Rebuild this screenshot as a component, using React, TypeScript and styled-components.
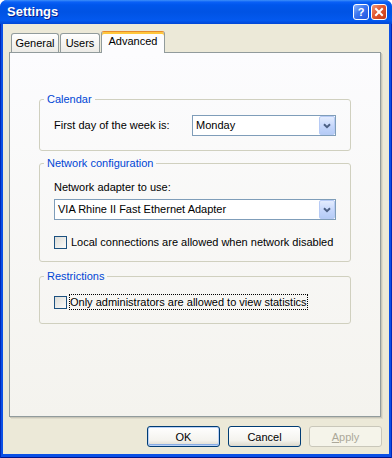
import styled, { createGlobalStyle } from "styled-components";

const GlobalStyle = createGlobalStyle`
  html, body {
    margin: 0;
    padding: 0;
    background: #ffffff;
  }
  body {
    font-family: "Liberation Sans", Arial, sans-serif;
    font-size: 11px;
    color: #000000;
  }
`;

const tabs = [
  { label: "General", width: 48 },
  { label: "Users", width: 40 },
  { label: "Advanced", width: 64, active: true },
];

function Chevron() {
  return (
    <svg width="8" height="6" viewBox="0 0 8 6">
      <path d="M1 1.2 L4 4.2 L7 1.2" fill="none" stroke="#4d6185" strokeWidth="2" />
    </svg>
  );
}

function Combo({ value, width }: { value: string; width?: number }) {
  return (
    <StCombo $width={width}>
      <StComboText>{value}</StComboText>
      <StDropButton>
        <Chevron />
      </StDropButton>
    </StCombo>
  );
}

function App() {
  return (
    <>
      <GlobalStyle />
      <StWindow>
        <StTitleBar>
          <StTitle>Settings</StTitle>
          <StCaptionButton $kind="help">?</StCaptionButton>
          <StCaptionButton $kind="close">
            <svg width="10" height="10" viewBox="0 0 10 10">
              <path d="M2 2 L8 8 M8 2 L2 8" stroke="#ffffff" strokeWidth="2" strokeLinecap="square" />
            </svg>
          </StCaptionButton>
        </StTitleBar>
        <StFrame>
          <StBody>
            <StTabRow>
              {tabs.map((tab) => (
                <StTab key={tab.label} $width={tab.width} $active={tab.active}>
                  {tab.label}
                </StTab>
              ))}
            </StTabRow>
            <StPanel>
              <StGroup $top={0}>
                <StLegend>Calendar</StLegend>
                <StGroupBody $pad="9px 14px 14px">
                  <StRow>
                    <StLabel>First day of the week is:</StLabel>
                    <Combo value="Monday" width={144} />
                  </StRow>
                </StGroupBody>
              </StGroup>

              <StGroup $top={6}>
                <StLegend>Network configuration</StLegend>
                <StGroupBody $pad="11px 14px 11px">
                  <StLabel>Network adapter to use:</StLabel>
                  <StStack>
                    <Combo value="VIA Rhine II Fast Ethernet Adapter" />
                  </StStack>
                  <StCheckRow $top={14}>
                    <StCheck />
                    <StCheckLabel>Local connections are allowed when network disabled</StCheckLabel>
                  </StCheckRow>
                </StGroupBody>
              </StGroup>

              <StGroup $top={8}>
                <StLegend>Restrictions</StLegend>
                <StGroupBody $pad="11px 14px 13px">
                  <StCheckRow $top={0}>
                    <StCheck />
                    <StCheckLabel $focused>Only administrators are allowed to view statistics</StCheckLabel>
                  </StCheckRow>
                </StGroupBody>
              </StGroup>
            </StPanel>
            <StButtonRow>
              <StButton $default>OK</StButton>
              <StButton>Cancel</StButton>
              <StButton disabled>
                <u>A</u>pply
              </StButton>
            </StButtonRow>
          </StBody>
        </StFrame>
      </StWindow>
    </>
  );
}

export default App;

const StWindow = styled.div`
  width: 392px;
  height: 458px;
  display: flex;
  flex-direction: column;
  border-radius: 7px 7px 0 0;
  overflow: hidden;
  background: #0a4be0;
`;

const StTitleBar = styled.div`
  height: 24px;
  flex: none;
  display: flex;
  align-items: center;
  gap: 2px;
  padding: 0 5px 0 7px;
  background: linear-gradient(
    to bottom,
    #3d8ff9 0px,
    #0a60f7 2px,
    #0056ec 5px,
    #0053e4 50%,
    #0359ef 85%,
    #0046d6 100%
  );
`;

const StTitle = styled.div`
  flex: 1;
  color: #ffffff;
  font-weight: bold;
  font-size: 13px;
  line-height: 16px;
  text-shadow: 1px 1px 0 #0a1e8c;
`;

const StCaptionButton = styled.div<{ $kind: "help" | "close" }>`
  width: 16px;
  height: 16px;
  box-sizing: border-box;
  border: 1px solid #ffffff;
  border-radius: 3px;
  display: flex;
  align-items: center;
  justify-content: center;
  color: #ffffff;
  font-weight: bold;
  font-size: 11px;
  line-height: 11px;
  background: ${(p) =>
    p.$kind === "close"
      ? "linear-gradient(135deg, #ef9a7c 0%, #e2562f 45%, #c63a14 100%)"
      : "linear-gradient(135deg, #8bb4fb 0%, #3b75ef 45%, #1f55df 100%)"};
`;

const StFrame = styled.div`
  flex: 1;
  display: flex;
  padding: 0 3px 4px;
  background: #0b50e6;
  box-shadow: inset 1px 0 #0029b8, inset -1px 0 #0029b8, inset 0 -1px #00138c;
`;

const StBody = styled.div`
  flex: 1;
  display: flex;
  flex-direction: column;
  padding: 7px 7px 0 6px;
  background: #ece9d8;
`;

const StTabRow = styled.div`
  position: relative;
  z-index: 1;
  height: 21px;
  display: flex;
  align-items: flex-end;
  gap: 1px;
  padding-left: 2px;
`;

const StTab = styled.div<{ $active?: boolean; $width: number }>`
  width: ${(p) => p.$width}px;
  height: ${(p) => (p.$active ? 22 : 19)}px;
  margin-bottom: ${(p) => (p.$active ? -1 : 0)}px;
  box-sizing: border-box;
  border: 1px solid #919b9c;
  border-bottom: none;
  border-top-color: ${(p) => (p.$active ? "#e68b2c" : "#919b9c")};
  border-radius: 3px 3px 0 0;
  padding-top: 3px;
  text-align: center;
  line-height: 13px;
  background: ${(p) =>
    p.$active ? "#fcfcfe" : "linear-gradient(to bottom, #ffffff, #ecebe6)"};
  box-shadow: ${(p) => (p.$active ? "inset 0 2px 0 #ffc73c" : "none")};
`;

const StPanel = styled.div`
  width: 372px;
  height: 365px;
  flex: none;
  box-sizing: border-box;
  border: 1px solid #919b9c;
  box-shadow: 1px 1px 0 #c9c6b8, 2px 2px 0 #dedbcb;
  background: linear-gradient(to bottom, #fcfcfe, #f4f3ee);
  padding: 40px 29px 0;
  display: flex;
  flex-direction: column;
`;

const StGroup = styled.fieldset<{ $top: number }>`
  margin: ${(p) => p.$top}px 0 0;
  padding: 0;
  min-width: 0;
  border: 1px solid #d0d0bf;
  border-radius: 3px;
`;

const StLegend = styled.legend`
  margin-left: 4px;
  padding: 0 3px;
  color: #0046d5;
  font-size: 11px;
  line-height: 13px;
`;

const StGroupBody = styled.div<{ $pad: string }>`
  padding: ${(p) => p.$pad};
`;

const StRow = styled.div`
  display: flex;
  align-items: center;
  justify-content: space-between;
`;

const StStack = styled.div`
  margin-top: 5px;
`;

const StLabel = styled.div`
  line-height: 13px;
`;

const StCombo = styled.div<{ $width?: number }>`
  width: ${(p) => (p.$width ? `${p.$width}px` : "auto")};
  height: 21px;
  box-sizing: border-box;
  border: 1px solid #7f9db9;
  background: #ffffff;
  display: flex;
  align-items: center;
  padding-left: 3px;
`;

const StComboText = styled.span`
  flex: 1;
  line-height: 13px;
`;

const StDropButton = styled.div`
  width: 16px;
  height: 19px;
  box-sizing: border-box;
  border: 1px solid #b7cbf5;
  border-radius: 2px;
  background: linear-gradient(to bottom, #e3ecfe, #c3d5fb 60%, #b5cbf6);
  display: flex;
  align-items: center;
  justify-content: center;
`;

const StCheckRow = styled.div<{ $top: number }>`
  margin-top: ${(p) => p.$top}px;
  display: flex;
  align-items: center;
`;

const StCheck = styled.span`
  width: 13px;
  height: 13px;
  flex: none;
  box-sizing: border-box;
  border: 1px solid #1c5180;
  background: linear-gradient(135deg, #dcdcd7, #fbfbf9);
`;

const StCheckLabel = styled.span<{ $focused?: boolean }>`
  margin-left: ${(p) => (p.$focused ? 2 : 3)}px;
  line-height: 14px;
  border: 1px dotted ${(p) => (p.$focused ? "#000000" : "transparent")};
  padding: 0;
`;

const StButtonRow = styled.div`
  display: flex;
  justify-content: flex-end;
  gap: 8px;
  margin-top: 9px;
`;

const StButton = styled.button<{ $default?: boolean }>`
  width: 73px;
  height: 21px;
  padding: 0;
  box-sizing: border-box;
  font-family: "Liberation Sans", Arial, sans-serif;
  font-size: 11px;
  color: #000000;
  border: 1px solid #003c74;
  border-radius: 3px;
  background: linear-gradient(to bottom, #ffffff, #f4f3ee 70%, #dcd8cc);
  box-shadow: ${(p) =>
    p.$default ? "inset 0 0 0 1px #b9d1f7, inset 0 -1px 0 1px #89ade4" : "none"};

  &:disabled {
    color: #aca899;
    border-color: #c9c7ba;
    background: #f5f4ea;
    box-shadow: none;
  }
`;
